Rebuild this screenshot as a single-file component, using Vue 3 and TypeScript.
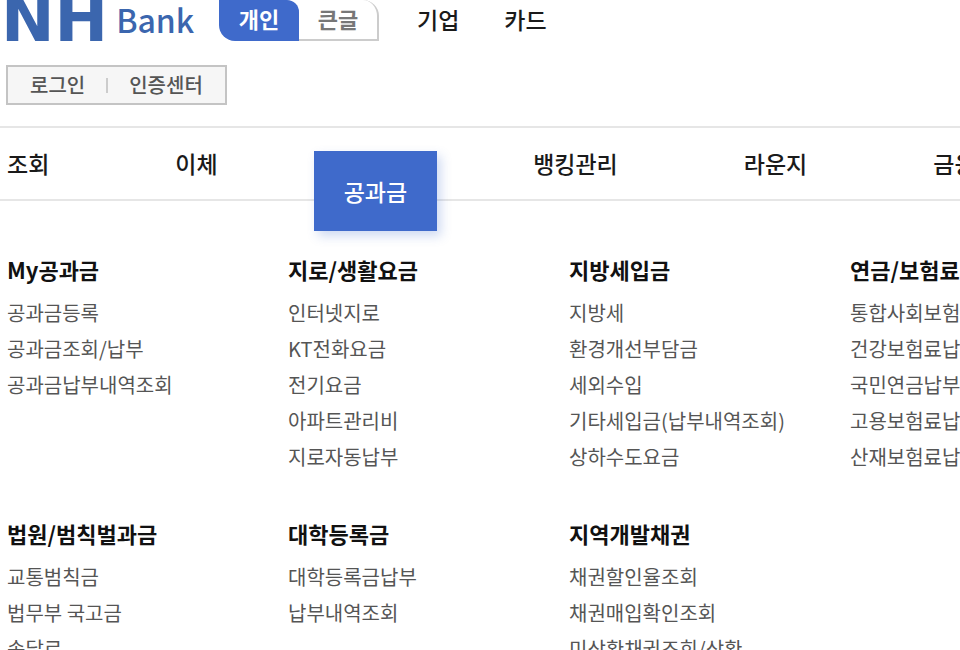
<script setup lang="ts">
interface MenuGroup {
  title: string
  items: string[]
}

const services: string[] = ['기업', '카드']

const mainMenu: string[] = ['조회', '이체', '공과금', '뱅킹관리', '라운지', '금융상품']
const activeMenu = '공과금'

const groups: MenuGroup[] = [
  { title: 'My공과금', items: ['공과금등록', '공과금조회/납부', '공과금납부내역조회'] },
  { title: '지로/생활요금', items: ['인터넷지로', 'KT전화요금', '전기요금', '아파트관리비', '지로자동납부'] },
  { title: '지방세입금', items: ['지방세', '환경개선부담금', '세외수입', '기타세입금(납부내역조회)', '상하수도요금'] },
  { title: '연금/보험료', items: ['통합사회보험료', '건강보험료납부', '국민연금납부', '고용보험료납부', '산재보험료납부'] },
  { title: '법원/범칙벌과금', items: ['교통범칙금', '법무부 국고금', '송달료'] },
  { title: '대학등록금', items: ['대학등록금납부', '납부내역조회'] },
  { title: '지역개발채권', items: ['채권할인율조회', '채권매입확인조회', '미상환채권조회/상환'] },
]
</script>

<template>
  <div class="page">
    <header class="header">
      <a class="logo" href="#">
        <span class="logo-nh">NH</span>
        <span class="logo-bank">Bank</span>
      </a>
      <div class="modes">
        <button type="button" class="mode mode-on">개인</button>
        <button type="button" class="mode mode-off">큰글</button>
      </div>
      <nav class="services">
        <a v-for="name in services" :key="name" href="#">{{ name }}</a>
      </nav>
    </header>

    <div class="account">
      <a href="#">로그인</a>
      <span class="divider"></span>
      <a href="#">인증센터</a>
    </div>

    <nav class="main-nav">
      <a
        v-for="name in mainMenu"
        :key="name"
        href="#"
        :class="{ active: name === activeMenu }"
      >{{ name }}</a>
    </nav>

    <main class="groups">
      <section v-for="group in groups" :key="group.title">
        <h2>{{ group.title }}</h2>
        <ul>
          <li v-for="item in group.items" :key="item"><a href="#">{{ item }}</a></li>
        </ul>
      </section>
    </main>
  </div>
</template>

<style>
body {
  margin: 0;
  background: #fff;
}
</style>

<style scoped>
.page {
  max-height: 100vh;
  overflow: hidden;
  font-family: "Noto Sans CJK KR", "Noto Sans", sans-serif;
  color: #1a1a1a;
  white-space: nowrap;
}

a {
  color: inherit;
  text-decoration: none;
}

.header {
  display: flex;
  align-items: flex-start;
  height: 41px;
}

.logo {
  display: flex;
  align-items: flex-start;
  gap: 8px;
  width: 218px;
  padding-left: 1px;
  color: #3b66ae;
  line-height: 38px;
}

.logo-nh {
  font-family: "DejaVu Sans", sans-serif;
  font-size: 64px;
  font-weight: 700;
}

.logo-bank {
  font-size: 32px;
  font-weight: 500;
}

.modes {
  display: flex;
}

.mode {
  width: 80px;
  height: 41px;
  margin: 0;
  padding: 0 0 4px;
  border: 0;
  font-family: inherit;
  font-size: 22px;
  font-weight: 700;
  line-height: 37px;
}

.mode-on {
  border-radius: 0 12px 0 16px;
  background: #3f6acb;
  color: #fff;
}

.mode-off {
  border: solid #ccc;
  border-width: 0 2px 2px 0;
  border-radius: 0 16px 0 0;
  padding-bottom: 2px;
  background: #fff;
  color: #777;
}

.services {
  display: flex;
  gap: 45px;
  padding-left: 38px;
  font-size: 23px;
  font-weight: 500;
  line-height: 38px;
}

.account {
  display: inline-flex;
  align-items: center;
  gap: 21px;
  margin: 24px 0 21px 6px;
  padding: 0 22px;
  border: 2px solid #c4c4c4;
  background: #f6f6f6;
  color: #555;
  font-size: 20px;
  font-weight: 500;
  line-height: 36px;
  vertical-align: top;
}

.divider {
  width: 2px;
  height: 15px;
  background: #ccc;
}

.main-nav {
  display: flex;
  align-items: flex-start;
  gap: 126px;
  padding: 18px 0 19px 7px;
  border: solid #e6e6e6;
  border-width: 2px 0;
  font-size: 23px;
  font-weight: 500;
  line-height: 34px;
}

.main-nav a {
  flex: none;
}

.main-nav .active {
  margin: 5px -30px -51px;
  padding: 0 30px;
  background: #3f6acb;
  box-shadow: 4px 5px 10px rgba(63, 106, 203, 0.25);
  color: #fff;
  line-height: 80px;
}

.groups {
  display: grid;
  grid-template-columns: repeat(4, minmax(281px, 1fr));
  gap: 40px 0;
  padding: 50px 0 40px 7px;
}

h2 {
  margin: 0 0 8px;
  color: #111;
  font-size: 22px;
  font-weight: 700;
  line-height: 36px;
}

ul {
  margin: 0;
  padding: 0;
  list-style: none;
}

li {
  color: #555;
  font-size: 20px;
  line-height: 36px;
}
</style>
